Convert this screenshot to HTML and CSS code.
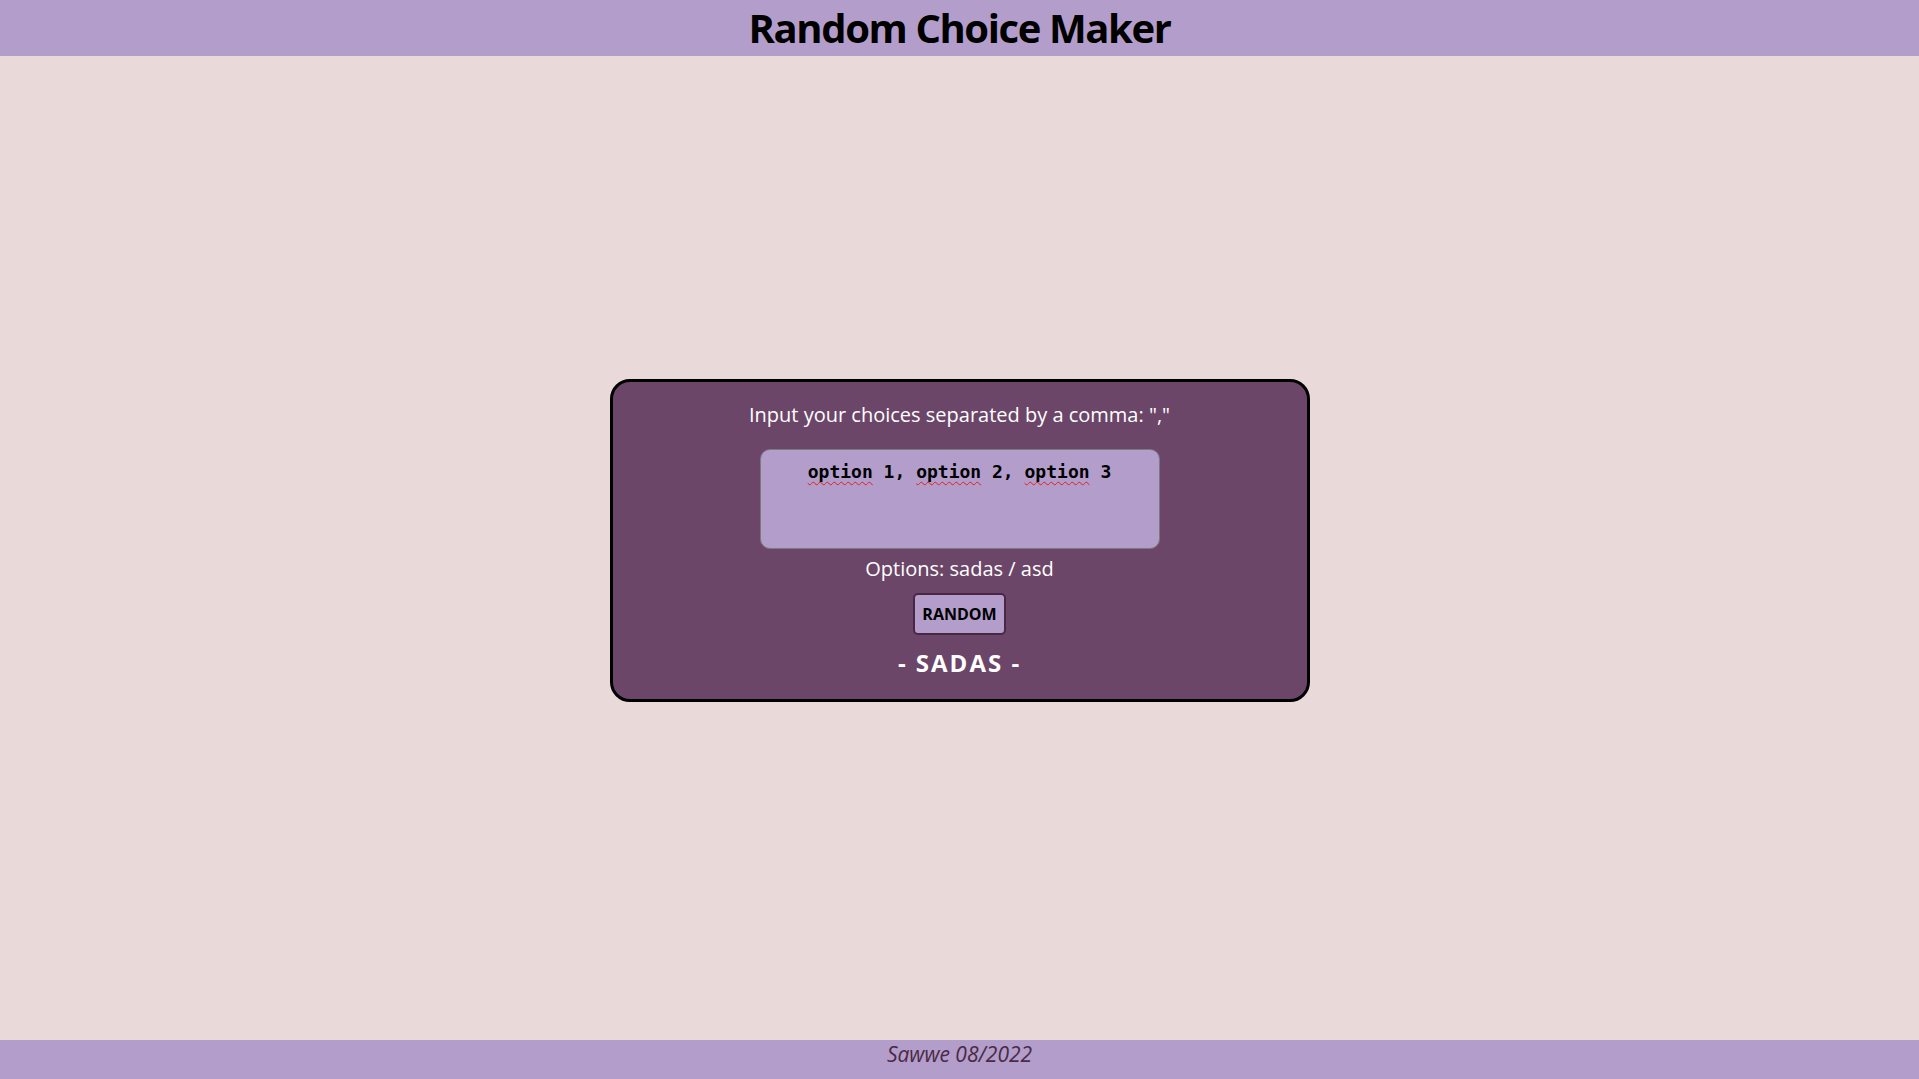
FILE: index.html
```html
<!DOCTYPE html>
<html lang="en">
<head>
<meta charset="utf-8">
<title>Random Choice Maker</title>
<link rel="stylesheet" href="styles.css">
</head>
<body>
<header class="topbar">
  <h1 class="title">Random Choice Maker</h1>
</header>
<main class="stage">
  <section class="card">
    <p class="prompt">Input your choices separated by a comma: ","</p>
    <div class="choices" contenteditable="true" role="textbox" aria-multiline="true"><span class="typo">option</span> 1, <span class="typo">option</span> 2, <span class="typo">option</span> 3</div>
    <p class="options">Options: sadas / asd</p>
    <button class="random-btn" type="button">RANDOM</button>
    <p class="result">- SADAS -</p>
  </section>
</main>
<footer class="bottombar">Sawwe 08/2022</footer>
</body>
</html>
```

FILE: styles.css
```css
html, body {
  margin: 0;
  padding: 0;
}

body {
  min-height: 100vh;
  display: grid;
  grid-template-rows: auto 1fr auto;
  background: #ead9d9;
  font-family: "Open Sans", "DejaVu Sans", sans-serif;
  color: #ffffff;
}

.topbar {
  background: #b39dcb;
  height: 56px;
  display: flex;
  justify-content: center;
  align-items: flex-start;
}

.title {
  margin: 0;
  font-size: 40px;
  font-weight: 700;
  line-height: 56px;
  letter-spacing: -1.4px;
  color: #000000;
}

.stage {
  display: flex;
  justify-content: center;
  align-items: center;
  padding-bottom: 15px;
}

.card {
  box-sizing: border-box;
  width: 700px;
  background: #6c4669;
  border: 3px solid #000000;
  border-radius: 20px;
  padding: 19px 20px 20px;
  display: flex;
  flex-direction: column;
  align-items: center;
}

.prompt {
  margin: 0;
  font-size: 20px;
  line-height: 28px;
}

.choices {
  box-sizing: border-box;
  margin-top: 20px;
  width: 400px;
  height: 100px;
  background: #b39dcb;
  border: 1px solid #7b7b7b;
  border-radius: 10px;
  padding: 11px 8px 0;
  text-align: center;
  font-family: "DejaVu Sans Mono", "Liberation Mono", monospace;
  font-weight: 700;
  font-size: 18px;
  line-height: 22px;
  color: #000000;
  outline: none;
  white-space: pre-wrap;
}

.typo {
  text-decoration: underline wavy #e0201c 1px;
  text-underline-offset: 3px;
  text-decoration-skip-ink: none;
}

.options {
  margin: 6px 0 0;
  font-size: 20px;
  line-height: 28px;
}

.random-btn {
  margin-top: 10px;
  background: #b39dcb;
  border: 2px solid #4a2845;
  border-radius: 5px;
  padding: 8px 7px;
  font-family: "Open Sans", "DejaVu Sans", sans-serif;
  font-weight: 700;
  font-size: 16px;
  line-height: 22px;
  color: #000000;
  cursor: pointer;
}

.result {
  margin: 12px 0 0;
  font-size: 24px;
  font-weight: 700;
  line-height: 32px;
  letter-spacing: 2px;
}

.bottombar {
  background: #b39dcb;
  height: 39px;
  box-sizing: border-box;
  text-align: center;
  font-style: italic;
  font-size: 21px;
  line-height: 28px;
  color: #4a2a45;
}
```
